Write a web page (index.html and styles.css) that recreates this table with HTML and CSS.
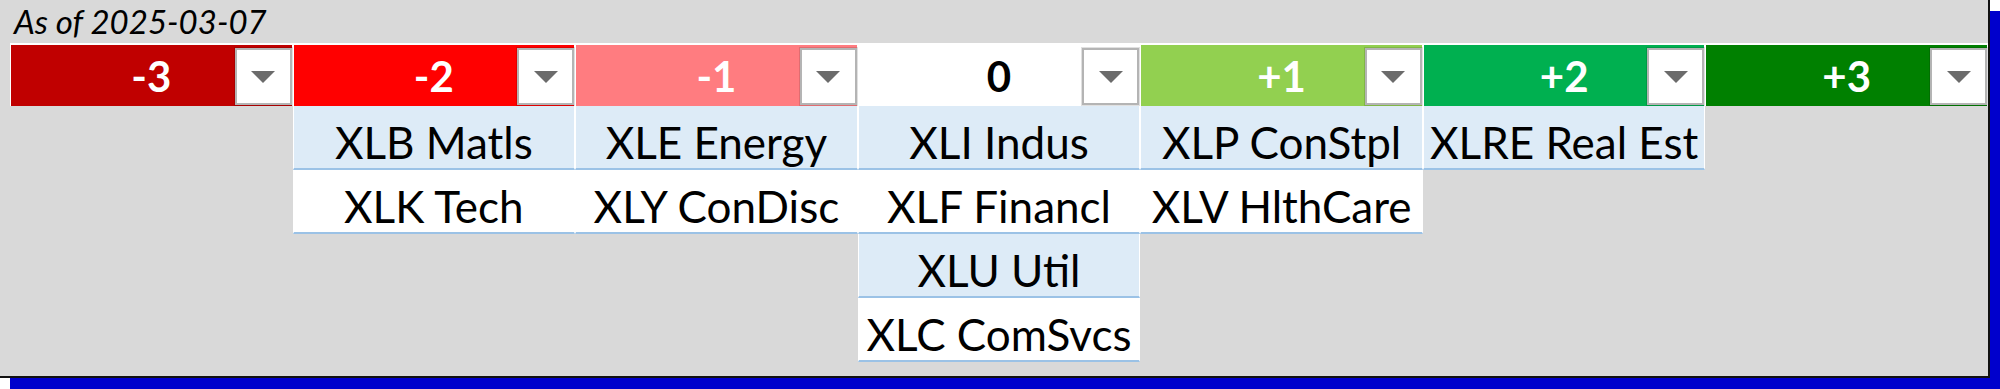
FILE: index.html
```html
<!DOCTYPE html>
<html>
<head>
<meta charset="utf-8">
<link rel="stylesheet" href="styles.css">
</head>
<body>
<div class="sheet">
  <div class="asof">As of 2025-03-07</div>
  <div class="board">
    <div class="col">
      <div class="head h-m3"><span class="lbl">-3</span><span class="dd"><i></i></span></div>
    </div>
    <div class="col">
      <div class="head h-m2"><span class="lbl">-2</span><span class="dd"><i></i></span></div>
      <div class="cell blue">XLB Matls</div>
      <div class="cell">XLK Tech</div>
    </div>
    <div class="col">
      <div class="head h-m1"><span class="lbl">-1</span><span class="dd"><i></i></span></div>
      <div class="cell blue">XLE Energy</div>
      <div class="cell">XLY ConDisc</div>
    </div>
    <div class="col">
      <div class="head h-0"><span class="lbl">0</span><span class="dd"><i></i></span></div>
      <div class="cell blue">XLI Indus</div>
      <div class="cell">XLF Financl</div>
      <div class="cell blue">XLU Util</div>
      <div class="cell">XLC ComSvcs</div>
    </div>
    <div class="col">
      <div class="head h-p1"><span class="lbl">+1</span><span class="dd"><i></i></span></div>
      <div class="cell blue">XLP ConStpl</div>
      <div class="cell">XLV HlthCare</div>
    </div>
    <div class="col">
      <div class="head h-p2"><span class="lbl">+2</span><span class="dd"><i></i></span></div>
      <div class="cell blue">XLRE Real Est</div>
    </div>
    <div class="col">
      <div class="head h-p3"><span class="lbl">+3</span><span class="dd"><i></i></span></div>
    </div>
  </div>
</div>
</body>
</html>
```
FILE: styles.css
```css
html {
  margin: 0;
  padding: 0;
  background: #ffffff;
}

body {
  margin: 0;
  padding: 0;
  width: 2000px;
  height: 389px;
  background-color: #ffffff;
  background-image: linear-gradient(#0000cc, #0000cc);
  background-repeat: no-repeat;
  background-position: 10px 11px;
  background-size: 1990px 378px;
}

.sheet {
  width: 1988px;
  height: 376px;
  background: #d9d9d9;
  border-right: 2px solid #111111;
  border-bottom: 2px solid #111111;
  display: flex;
  flex-direction: column;
  font-family: Lato, "Open Sans", sans-serif;
  color: #000000;
}

.asof {
  height: 43px;
  box-sizing: border-box;
  padding-left: 14px;
  font-style: italic;
  font-size: 33px;
  line-height: 43px;
}

.board {
  margin-left: 10px;
  width: 1978px;
  display: grid;
  grid-template-columns: repeat(7, 1fr);
  align-items: start;
}

.col {
  display: flex;
  flex-direction: column;
}

.head {
  height: 61px;
  box-sizing: content-box;
  border-top: 2px solid #ffffff;
  border-left: 1px solid #ffffff;
  border-right: 1px solid #ffffff;
  display: grid;
  grid-template-columns: 57px 1fr 57px;
  align-items: center;
  font-weight: bold;
  font-size: 42px;
  color: #ffffff;
}

.lbl {
  grid-column: 2;
  text-align: center;
}

.dd {
  grid-column: 3;
  align-self: start;
  margin-top: 3px;
  width: 57px;
  height: 57px;
  box-sizing: border-box;
  background: #ffffff;
  border: 2px solid #b4b4b4;
  box-shadow: 0 0 0 1px rgba(0, 0, 0, 0.12);
  display: flex;
  align-items: center;
  justify-content: center;
}

.dd i {
  display: block;
  width: 0;
  height: 0;
  border-left: 12px solid transparent;
  border-right: 12px solid transparent;
  border-top: 12px solid #6b6b6b;
}

.h-m3 { background: #c00000; }
.h-m2 { background: #ff0000; }
.h-m1 { background: #ff7c80; }
.h-0  { background: #ffffff; color: #000000; }
.h-p1 { background: #92d050; }
.h-p2 { background: #00b050; }
.h-p3 { background: #008000; }

.cell {
  height: 51px;
  padding-top: 11px;
  border-left: 1px solid #ffffff;
  border-right: 1px solid #ffffff;
  border-bottom: 2px solid #9bc2e6;
  background: #ffffff;
  text-align: center;
  font-size: 44px;
  line-height: 51px;
  white-space: nowrap;
}

.cell.blue {
  background: #ddebf7;
}
```
